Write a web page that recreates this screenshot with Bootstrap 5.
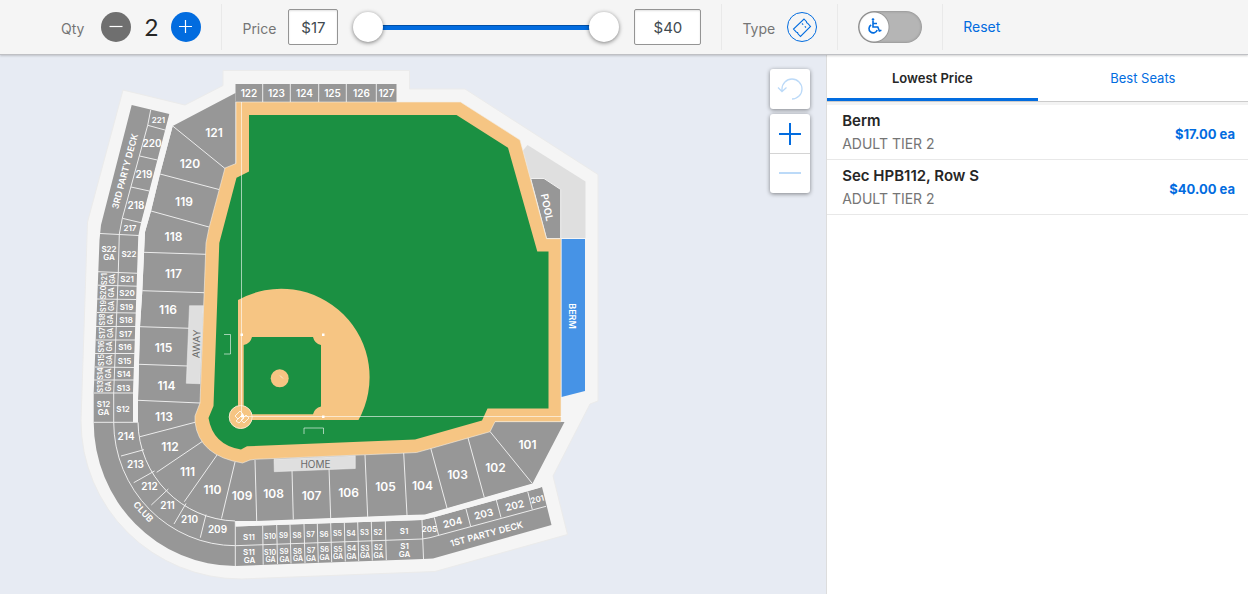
<!DOCTYPE html>
<html lang="en">
<head>
<meta charset="utf-8">
<meta name="viewport" content="width=device-width, initial-scale=1">
<title>Choose seats</title>
<link href="https://cdn.jsdelivr.net/npm/bootstrap@5.3.0/dist/css/bootstrap.min.css" rel="stylesheet">
<style>
:root{--brand:#026cdf}
body{font-family:Inter,"Liberation Sans",sans-serif;font-size:14px;line-height:20px;color:#262626;background:#fff}
.filters{height:55px;background:#f5f5f5;border-bottom:1px solid #bfc0c4;box-shadow:0 1px 2px rgba(0,0,0,.18);z-index:2}
.filter-cell{height:46px;padding:0 20px;border-right:1px solid #e9e9e9}
.filter-cell:first-child{padding-left:61px}
.filter-cell:first-child .caption{margin-right:17px}
.filter-cell:last-child{border:0}
.caption{color:#757575;padding-top:4px;margin-right:12px}
.round-btn{width:30px;height:30px;border-radius:50%;border:0;padding:0;background:var(--brand)}
.round-btn.minus{background:#6f6f6f}
.round-btn.outline{background:none;border:1px solid var(--brand)}
.qty-value{width:40px;font-family:Lato,sans-serif;font-size:24px;text-align:center}
.money{height:36px;border:1px solid #949494;border-radius:2px;background:#fff;color:#414a50;text-align:center;font-size:15px;padding:0;box-shadow:inset 0 1px 2px rgba(0,0,0,.12)}
.money-low{width:50px}.money-high{width:67px}
.price-range{width:266px;height:32px;margin:0 15px;background:linear-gradient(#0150a7 0 1px,var(--brand) 1px) center/236px 5px no-repeat}
.price-range input{grid-area:1/1;width:100%;margin:0;height:32px;appearance:none;-webkit-appearance:none;background:none;pointer-events:none}
.price-range input::-webkit-slider-thumb{-webkit-appearance:none;width:30px;height:30px;border-radius:50%;background:#fff;box-shadow:0 1px 4px rgba(0,0,0,.5);pointer-events:auto}
.access-toggle{width:64px;height:32px}
.access-toggle input{grid-area:1/1;appearance:none;-webkit-appearance:none;margin:0;width:64px;height:32px;border-radius:16px;background:radial-gradient(circle at 16px 16px,#fff 14px,#999 15px,transparent 16px),#b5b5b5;box-shadow:inset 0 0 3px rgba(0,0,0,.3)}
.access-toggle svg{grid-area:1/1;margin:6px 0 0 8px;pointer-events:none}
a.reset{color:var(--brand)}
.map-pane{background:#e7ebf3;min-width:0}
.map-tools{top:14px;right:16px;gap:5px}
.tool-box{border-radius:3px;box-shadow:0 1px 4px rgba(0,0,0,.45);background:#fff}
.tool-box button{width:40px;border:0;padding:0;background:none;display:block}
.tool-box button+button{border-top:1px solid #d4d4d4}
.offers{flex:0 0 33.8%;min-width:300px;border-left:1px solid #ddd}
.sort-tabs{background:#fff;border-bottom:1px solid #ccc}
.sort-tabs button{height:46px;border:0;border-bottom:3px solid transparent;background:none;color:var(--brand);padding:3px 0 0;font-size:13px}
.sort-tabs button.current{color:#262626;font-weight:600;border-bottom-color:var(--brand)}
.offer-list{border-top:3px solid #f3f3f3}
.offer{height:55px;padding:4px 13px 0 15px;border-bottom:1px solid #e8e8e8}
.offer h2{font-size:15px;line-height:24px;font-weight:600;margin:0}
.offer p{margin:0;color:#757575;line-height:22px}
.offer strong{color:var(--brand);font-size:13px;font-weight:700}
svg text{font-family:Inter,sans-serif;font-weight:600;fill:#fff;text-anchor:middle}
.t12{font-size:12px}.t10{font-size:10px}.t9{font-size:9px}.t8{font-size:8px}.t7{font-size:7px}
.shell{fill:#f5f5f5;stroke:#ebebeb}
.stand{fill:#979797}
.cuts{fill:none;stroke:#ececec;stroke-width:1}
.dirt{fill:#f6c583}
.turf{fill:#1b9042}
.dugout{fill:#dfdfdf;stroke:#f0f0f0;stroke-width:.5}
.chalk{fill:none;stroke:#fff;stroke-opacity:.6}
svg text.dark{fill:#6b6b6b;font-weight:400}
</style>
</head>
<body class="vh-100 d-flex flex-column overflow-hidden">
<header class="filters d-flex align-items-center flex-shrink-0 position-relative">
  <div class="filter-cell d-flex align-items-center">
    <span class="caption">Qty</span>
    <button class="round-btn minus" aria-label="Fewer"><svg class="d-block" width="30" height="30"><path d="M8.500 14.500h13" stroke="#fff" stroke-width="1.200"/></svg></button>
    <output class="qty-value">2</output>
    <button class="round-btn" aria-label="More"><svg class="d-block" width="30" height="30"><path d="M8 14.500h13M14.500 8v13" stroke="#fff" stroke-width="1.200"/></svg></button>
  </div>
  <div class="filter-cell d-flex align-items-center">
    <label class="caption" for="low">Price</label>
    <input class="money money-low" id="low" value="$17">
    <div class="price-range d-grid"><input type="range" min="17" max="40" value="17" aria-label="Lowest price"><input type="range" min="17" max="40" value="40" aria-label="Highest price"></div>
    <input class="money money-high" value="$40" aria-label="Highest price">
  </div>
  <div class="filter-cell d-flex align-items-center">
    <span class="caption">Type</span>
    <button class="round-btn outline" aria-label="Ticket type"><svg class="d-block" width="28" height="28" fill="none" stroke="#026cdf"><path d="M16 6 18.500 8.700q-.3 1.300 1.300 1.700L22.500 13.500 12.500 23.500 9.800 20.600q.2-1.500-1.400-1.400L5.500 16zM14 10.500l1.200 1.200M16.800 13.300l1.200 1.200" stroke-width="1.100"/></svg></button>
  </div>
  <div class="filter-cell d-flex align-items-center">
    <label class="access-toggle d-grid"><input type="checkbox" aria-label="Accessible seats"><svg width="18" height="20" fill="none" stroke="#026cdf" stroke-width="1.600"><circle cx="7" cy="2.500" r="1.300" fill="#026cdf" stroke="none"/><path d="M7 4V10H11.800l1.600 4 2-.700M7 6.500h4M5.200 8a4.200 4.200 0 1 0 6 5"/></svg></label>
  </div>
  <div class="filter-cell d-flex align-items-center"><a class="reset text-decoration-none" href="#">Reset</a></div>
</header>
<main class="d-flex flex-grow-1 overflow-hidden">
  <section class="map-pane flex-grow-1 position-relative">
    <svg class="w-100 h-100 d-block" viewBox="0 55 826 539" preserveAspectRatio="xMinYMin meet" role="img" aria-label="Seat map">
      <path class="shell" d="M123 90 185 105 223 85.500V70.500H409.500V89H465L598 174.500V401L590 404 553 476 567.500 534.500 435 571.500 241 579A160 158 0 0 1 81 421L87.500 222z"/>
      <path fill="#dfdfdf" d="M527.500 145 585.500 181.500V238H546L522.500 151z"/>
      <path fill="#4693e6" d="M561.500 239H585V391L561.500 397z"/>
      <!-- lower bowl -->
      <path class="stand" d="M235.500 93 172.700 126 160 174 151 211 145 232 142.300 291 140 327 138 400V422A100 100 0 0 0 235 521H257L407 515 425 514.500 484 497.500 532.500 483.500 564.500 422H440V300H235.500z"/>
      <!-- upper bowl and party decks -->
      <path class="stand" d="M131.700 105 169.300 114 141 223 138.300 236 133 393V422H138A100 100 0 0 0 235 521L235.500 526.500 422 520 435 517 542 487 551.500 525 433 558.500 423 559 235.500 566A142 144 0 0 1 93.700 422V393L99.500 240 101 225z"/>
      <path class="stand" d="M235.500 84H396.500V102H235.500z"/>
      <path class="cuts" d="M262.700 84v18M290.300 84v18M318.700 84v18M346.300 84v18M376.300 84v18M172.700 126 225 168.500M160 174l59 15.500M151 211l58 16M144 252.300l62 2M142.300 290.700l62 2M140 326.700l50 1.600M139 364.300l49 1.700M138 400.300l62 2.700M140 436.700 195 422.300M156.700 472.300 203 441M184.300 501.700 217 455M221.500 518.500 235 462M256.700 521 255 460M293.300 519.500 292 470M330.700 518.500 329 468M367.700 517 365 455M407 515 403.700 453M447 508 430.700 448M484.300 497.500 468 438M532.300 483.500 490 431.500"/>
      <path class="cuts" d="M150.700 110 147.700 125.300 122.300 218.300 119.300 234 118.300 272 113.700 393V422M147.700 125.300l17.300 4.700M139.700 156l17.600 4M131 187l18.300 4M122.300 218.300l18.700 4.400M100 233.500l39 2M98 271.700l39.700 1.600M98 285.200l39 1M97 299l39.500.500M97 312.500l39 .500M96 326.500h40M96 340h39.500M95 353.500h40M95 367l39.500.500M94 380h40M94 393h40M93.700 422.300H138A100 100 0 0 0 235 521M113.700 422A122 124 0 0 0 235.500 545.700L422 539 430 537.700 546 506.300M121 456l23-6.300M133.700 482.700 154.500 471M151.300 505l17-16M174 524l12-20.500M200.300 537.700 206 514.500M235.300 521V566M262.700 525.700l.500 39M276.700 525l.800 39M290 524.500l1 39M304 524l1 39M317.300 523.500l1 39M330.700 523l1 39M344.300 522.500l1 39M357.700 522l1 39M371.300 521.500l1 39M385.300 521l1 39M422 520l1.500 39M434.300 517.300 438.500 535M466 509l4.700 17.500M496.300 500l4.700 17.500M527.700 491.500l4.600 18"/>
      <path fill="#979797" stroke="#f0f0f0" d="M530.700 178.500H544L560.700 189.500V238.500H546.500z"/>
      <!-- field -->
      <path class="dirt" stroke="#f3eee5" stroke-width=".6" d="M236 102H460.500L520 140 546.500 238.700H561V421.700H495L490 431.700 431 448.500 416.500 452.500 400 453.300 255 459.300 250 460 242.500 463Q199 456 195 422V416L200 403 206 243 209 228 225 168 236 163.500z"/>
      <path class="turf" d="M249 115H456.500L508 147.700 537.300 251.500H548.500V408.500H487.500L482 420.500 415 439.500 247 446.300 241 449.500Q213 445 208.500 418L213.500 406 219.300 243 236.500 177.700 249 171.500z"/>
      <path class="dirt" d="M238 300A88.400 88.400 0 0 1 358.500 420H238z"/>
      <path class="turf" d="M252 337H313A10.500 10.500 0 0 0 321 345V406.500A10.500 10.500 0 0 0 313 414.300H252L243.700 406V345A10.500 10.500 0 0 0 252 337z"/>
      <circle class="dirt" cx="279.700" cy="378.300" r="9"/>
      <circle class="dirt" cx="240.700" cy="417" r="11.500" stroke="#fbe9cf"/>
      <path class="chalk" d="M241.500 102V416.500H562M224 334.500h6.500v19.500H224M304 434v-6h19.500v6M280 375.500l3 3"/>
      <path fill="none" stroke="#fff" stroke-width=".8" d="m235 416 5-5 3 3-5 5zM241 420l5-5 3 3-5 5zM238 419l4-4 2 3-5 5-3-2z"/>
      <path fill="#fff" d="M240.500 333.500h2.500v2.500h-2.500zM322 333.500h2.500v2.500H322zM322 415.500h2.500v2.500H322zM241 414.500h3v3h-3z"/>
      <path class="dugout" d="M189.500 305.700H203.300L200 383.700 186.300 383.300z"/>
      <path class="dugout" d="M274 459.300 355.300 455.700V468.500L274.300 471.700z"/>
      <path fill="#f5f5f5" d="M133.500 393 139 236 141.500 223 170 114 172.700 126 160 174 151 211 145 232 142.300 291 140 327 138 400V421.500H133z"/>
      <path fill="#f5f5f5" d="M235.800 521.500H257L407 515.500 425 515 484 498 532.500 484 541 487.500 435 517 422 520 235.800 526.500z"/>
      <g class="t10">
        <text x="249" y="97">122</text><text x="276.500" y="97">123</text><text x="304.500" y="97">124</text><text x="332.500" y="97">125</text><text x="361.500" y="97">126</text><text x="386.500" y="97">127</text>
        <text x="152" y="147">220</text><text x="144" y="178">219</text><text x="136" y="209">218</text>
        <text x="126" y="440">214</text><text x="135.500" y="468">213</text><text x="149.500" y="490">212</text><text x="167.500" y="509">211</text><text x="189.500" y="523">210</text><text x="217.500" y="533">209</text>
        <text transform="translate(453.500 526) rotate(-14)">204</text><text transform="translate(484.500 517.500) rotate(-14)">203</text><text transform="translate(515.500 509) rotate(-14)">202</text>
        <text class="t9" transform="translate(128 172) rotate(-75)">3RD PARTY DECK</text>
        <text class="t9" transform="translate(487.500 537) rotate(-15)">1ST PARTY DECK</text>
        <text class="dark" transform="translate(200 344) rotate(-88)">AWAY</text><text class="dark" x="315.500" y="467.500">HOME</text>
        <text transform="translate(543.500 208) rotate(78)">POOL</text>
        <text class="t9" transform="translate(569 316) rotate(90)">BERM</text>
        <text class="t9" transform="translate(141 514) rotate(47)">CLUB</text>
      </g>
      <g class="t12">
        <text x="214" y="137">121</text><text x="190" y="168">120</text><text x="184" y="206">119</text><text x="173.500" y="241">118</text><text x="173.500" y="278">117</text><text x="168" y="314">116</text><text x="163.500" y="352">115</text><text x="166.500" y="390">114</text><text x="164" y="421">113</text><text x="170" y="451">112</text><text x="187.500" y="476">111</text><text x="212.500" y="494">110</text><text x="242" y="500">109</text><text x="273.500" y="498">108</text><text x="311.500" y="500">107</text><text x="348.500" y="497">106</text><text x="385.500" y="491">105</text><text x="422.500" y="490">104</text><text x="457.500" y="479">103</text><text x="495.500" y="472">102</text><text x="527.500" y="449">101</text>
      </g>
      <g class="t8">
        <text x="158.500" y="123">221</text><text x="130" y="231">217</text><text x="429.500" y="532">205</text><text transform="translate(538 502) rotate(-14)">201</text>
        <text x="129" y="257">S22</text><text x="109" y="252">S22</text><text x="109" y="260">GA</text>
        <text x="127" y="282">S21</text><text x="127" y="296">S20</text><text x="126.500" y="309.500">S19</text><text x="126" y="323">S18</text><text x="125.500" y="336.500">S17</text><text x="125" y="350">S16</text><text x="124.500" y="363.500">S15</text><text x="124" y="377">S14</text><text x="123.500" y="390.500">S13</text>
        <text x="123" y="412">S12</text><text x="103.500" y="407">S12</text><text x="103.500" y="415">GA</text>
        <text x="249" y="540">S11</text><text x="249" y="555">S11</text><text x="249.500" y="563">GA</text>
        <text x="404" y="534">S1</text><text x="404.500" y="549">S1</text><text x="404.500" y="557">GA</text>
      </g>
      <g class="t7">
        <text transform="translate(107 279) rotate(-90)">S21</text><text transform="translate(115 279) rotate(-90)">GA</text>
        <text transform="translate(106 292.500) rotate(-90)">S20</text><text transform="translate(114 292.500) rotate(-90)">GA</text>
        <text transform="translate(106 306) rotate(-90)">S19</text><text transform="translate(114 306) rotate(-90)">GA</text>
        <text transform="translate(105 319.500) rotate(-90)">S18</text><text transform="translate(113 319.500) rotate(-90)">GA</text>
        <text transform="translate(105 333) rotate(-90)">S17</text><text transform="translate(113 333) rotate(-90)">GA</text>
        <text transform="translate(104 346.500) rotate(-90)">S16</text><text transform="translate(112 346.500) rotate(-90)">GA</text>
        <text transform="translate(104 360) rotate(-90)">S15</text><text transform="translate(112 360) rotate(-90)">GA</text>
        <text transform="translate(103 373.500) rotate(-90)">S14</text><text transform="translate(111 373.500) rotate(-90)">GA</text>
        <text transform="translate(103 386.500) rotate(-90)">S13</text><text transform="translate(111 386.500) rotate(-90)">GA</text>
        <text x="270" y="538.500">S10</text><text x="283.500" y="538">S9</text><text x="297" y="537.500">S8</text><text x="310.500" y="537">S7</text><text x="324" y="536.500">S6</text><text x="337.500" y="536">S5</text><text x="351" y="535.500">S4</text><text x="364.500" y="535">S3</text><text x="378" y="534.500">S2</text>
        <text x="270" y="554.500">S10</text><text x="284" y="554">S9</text><text x="297.500" y="553.500">S8</text><text x="311" y="553">S7</text><text x="324.500" y="552">S6</text><text x="338" y="551.500">S5</text><text x="351.500" y="551">S4</text><text x="365" y="550.500">S3</text><text x="378.500" y="550">S2</text>
        <text x="270.500" y="562">GA</text><text x="284.500" y="561.500">GA</text><text x="298" y="561">GA</text><text x="311" y="560.500">GA</text><text x="324.500" y="559.500">GA</text><text x="338" y="559">GA</text><text x="351.500" y="558.500">GA</text><text x="365" y="558">GA</text><text x="378.500" y="557.500">GA</text>
      </g>
    </svg>
    <div class="map-tools position-absolute d-flex flex-column">
      <div class="tool-box"><button aria-label="Reset map"><svg class="d-block" width="40" height="40" fill="none" stroke="#bcdaf8" stroke-width="1.300"><path d="M12 22.500v-2.500A10 10 0 1 1 22 30M8 18.500l4 4 4.500-4"/></svg></button></div>
      <div class="tool-box"><button aria-label="Zoom in"><svg class="d-block" width="40" height="39"><path d="M9 20h22M20 9v22" stroke="#026cdf" stroke-width="2"/></svg></button><button aria-label="Zoom out"><svg class="d-block" width="40" height="39"><path d="M9 19h22" stroke="#bcdaf8" stroke-width="2"/></svg></button></div>
    </div>
  </section>
  <aside class="offers bg-white">
    <div class="sort-tabs d-flex"><button class="current w-50">Lowest Price</button><button class="w-50">Best Seats</button></div>
    <ul class="offer-list list-unstyled m-0">
      <li class="offer d-flex justify-content-between"><div><h2>Berm</h2><p>ADULT TIER 2</p></div><strong class="align-self-center">$17.00 ea</strong></li>
      <li class="offer d-flex justify-content-between"><div><h2>Sec HPB112, Row S</h2><p>ADULT TIER 2</p></div><strong class="align-self-center">$40.00 ea</strong></li>
    </ul>
  </aside>
</main>
<script src="https://cdn.jsdelivr.net/npm/bootstrap@5.3.0/dist/js/bootstrap.bundle.min.js"></script>
</body>
</html>
